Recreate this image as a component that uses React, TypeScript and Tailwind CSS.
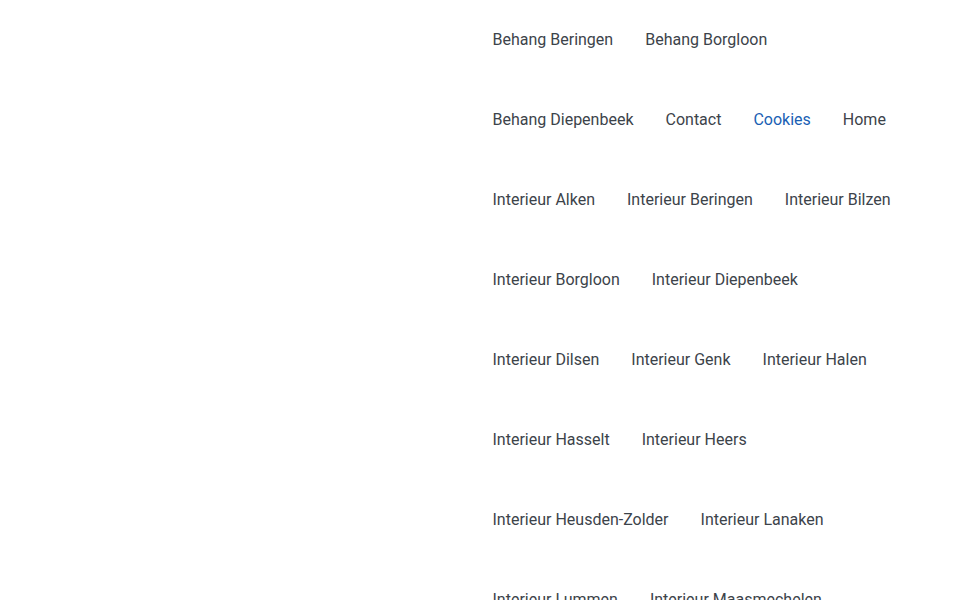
const links = [
  'Behang Beringen',
  'Behang Borgloon',
  'Behang Diepenbeek',
  'Contact',
  'Cookies',
  'Home',
  'Interieur Alken',
  'Interieur Beringen',
  'Interieur Bilzen',
  'Interieur Borgloon',
  'Interieur Diepenbeek',
  'Interieur Dilsen',
  'Interieur Genk',
  'Interieur Halen',
  'Interieur Hasselt',
  'Interieur Heers',
  'Interieur Heusden-Zolder',
  'Interieur Lanaken',
  'Interieur Lummen',
  'Interieur Maasmechelen',
]

export default function App() {
  return (
    <div className="flex min-h-screen bg-white font-['Roboto','Liberation_Sans',sans-serif]">
      <div className="w-[476.5px] shrink-0" />
      <nav className="w-[457px]">
        <ul className="flex flex-wrap">
          {links.map((label) => (
            <li key={label}>
              <a
                href="#"
                className={`block px-4 py-7 text-base leading-6 ${
                  label === 'Cookies' ? 'text-[#1a5fb4]' : 'text-[#3c434a]'
                }`}
              >
                {label}
              </a>
            </li>
          ))}
        </ul>
      </nav>
    </div>
  )
}
